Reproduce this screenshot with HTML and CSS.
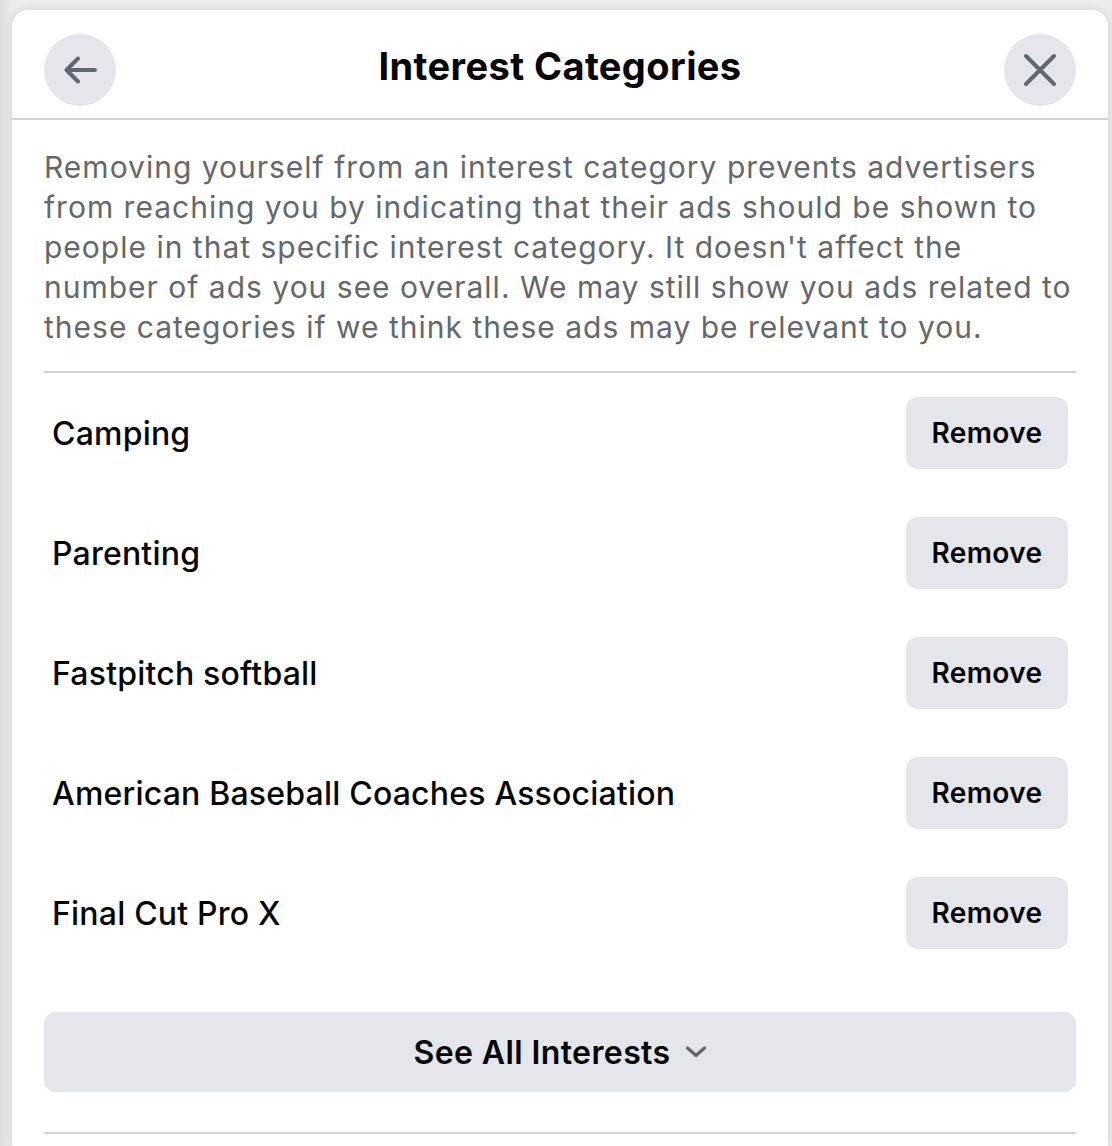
FILE: index.html
```html
<!DOCTYPE html>
<html lang="en">
<head>
    <meta charset="UTF-8">
    <meta name="viewport" content="width=device-width, initial-scale=1.0">
    <title>Interest Categories</title>
    <link rel="stylesheet" href="styles.css">
</head>
<body>
    <div class="page">
        <div class="card">
            <div class="header">
                <button class="circle-btn" aria-label="Back">
                    <svg width="36" height="36" viewBox="0 0 36 36">
                        <path d="M33 18H5M16 6.5L4.5 18 16 29.5" fill="none" stroke="#606770" stroke-width="4" stroke-linecap="round" stroke-linejoin="round"/>
                    </svg>
                </button>
                <h1 class="title">Interest Categories</h1>
                <button class="circle-btn" aria-label="Close">
                    <svg width="36" height="36" viewBox="0 0 36 36">
                        <path d="M4 4L32 32M32 4L4 32" fill="none" stroke="#606770" stroke-width="4" stroke-linecap="round"/>
                    </svg>
                </button>
            </div>

            <div class="content">
                <p class="intro">Removing yourself from an interest category prevents advertisers from reaching you by indicating that their ads should be shown to people in that specific interest category. It doesn't affect the number of ads you see overall. We may still show you ads related to these categories if we think these ads may be relevant to you.</p>

                <ul class="interest-list">
                    <li class="interest-row">
                        <span class="interest-name">Camping</span>
                        <button class="remove-btn">Remove</button>
                    </li>
                    <li class="interest-row">
                        <span class="interest-name">Parenting</span>
                        <button class="remove-btn">Remove</button>
                    </li>
                    <li class="interest-row">
                        <span class="interest-name">Fastpitch softball</span>
                        <button class="remove-btn">Remove</button>
                    </li>
                    <li class="interest-row">
                        <span class="interest-name">American Baseball Coaches Association</span>
                        <button class="remove-btn">Remove</button>
                    </li>
                    <li class="interest-row">
                        <span class="interest-name">Final Cut Pro X</span>
                        <button class="remove-btn">Remove</button>
                    </li>
                </ul>

                <button class="see-all-btn">
                    See All Interests
                    <svg width="22" height="14" viewBox="0 0 22 14">
                        <path d="M2.5 3L11 10.5 19.5 3" fill="none" stroke="#65676b" stroke-width="3.2" stroke-linecap="round" stroke-linejoin="round"/>
                    </svg>
                </button>

                <div class="footer-line"></div>
            </div>
        </div>
    </div>
</body>
</html>
```

FILE: styles.css
```css
body {
    margin: 0;
    padding: 0;
    background: #e9e9e9;
    font-family: Inter, "Noto Sans", Arial, sans-serif;
    color: #050505;
    overflow: hidden;
}
.page {
    height: 1146px;
    padding: 10px 4px 0 12px;
    box-sizing: border-box;
    background: linear-gradient(90deg, #dcdcdc 0, #ececec 12px, #ececec 100%);
}
.card {
    background: #ffffff;
    border-radius: 16px 16px 0 0;
    height: 100%;
    box-shadow: 0 0 8px rgba(0, 0, 0, 0.12);
}
.header {
    display: flex;
    align-items: center;
    justify-content: space-between;
    padding: 24px 32px 12px 32px;
    border-bottom: 2px solid #d3d4d6;
}
.circle-btn {
    width: 72px;
    height: 72px;
    border-radius: 50%;
    border: none;
    background: #e4e6eb;
    display: flex;
    align-items: center;
    justify-content: center;
    padding: 0;
    cursor: pointer;
}
.title {
    margin: 0;
    font-size: 38px;
    font-weight: 700;
    letter-spacing: 0.4px;
    position: relative;
    top: -4px;
}
.content {
    padding: 0 32px;
}
.intro {
    margin: 0;
    padding: 27px 0 24px 0;
    font-size: 30px;
    line-height: 40px;
    letter-spacing: 1px;
    color: #65676b;
    border-bottom: 2px solid #d3d4d6;
}
.interest-list {
    list-style: none;
    margin: 0;
    padding: 0;
}
.interest-row {
    height: 120px;
    display: flex;
    align-items: center;
    justify-content: space-between;
    padding: 0 8px;
}
.interest-name {
    font-size: 32px;
    font-weight: 450;
    letter-spacing: 0.2px;
}
.remove-btn {
    width: 162px;
    height: 72px;
    border: none;
    border-radius: 12px;
    background: #e4e6eb;
    font-family: inherit;
    font-size: 28px;
    font-weight: 600;
    letter-spacing: 0.4px;
    color: #050505;
    cursor: pointer;
}
.see-all-btn {
    margin-top: 39px;
    width: 100%;
    height: 80px;
    border: none;
    border-radius: 12px;
    background: #e4e6eb;
    font-family: inherit;
    font-size: 32px;
    font-weight: 600;
    letter-spacing: 0.4px;
    color: #050505;
    display: flex;
    align-items: center;
    justify-content: center;
    gap: 14px;
    cursor: pointer;
}
.footer-line {
    margin-top: 40px;
    border-top: 2px solid #d3d4d6;
}
```
